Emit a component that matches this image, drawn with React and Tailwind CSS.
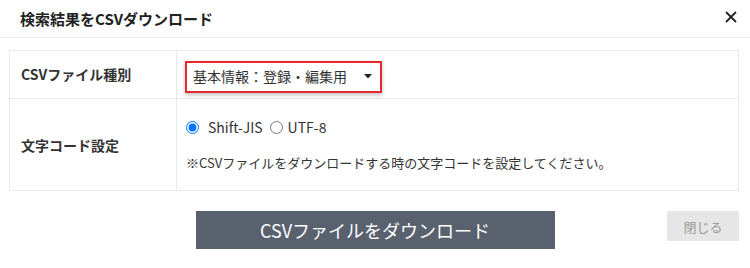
import React from "react";

const font = { fontFamily: '"Noto Sans CJK JP", "Noto Sans", sans-serif' };

export default function App() {
  return (
    <div className="w-[750px] h-[268px] bg-white text-[#333]" style={font}>
      <div className="flex items-center justify-between h-[38px] border-b border-[#e8e8e8] pl-[20px] pr-[13px]">
        <div className="text-[15px] font-bold leading-none text-[#222]">検索結果をCSVダウンロード</div>
        <svg width="12" height="12" viewBox="0 0 12 12" className="mt-[-4px]">
          <path d="M1 1L11 11M11 1L1 11" stroke="#222" strokeWidth="1.8" />
        </svg>
      </div>

      <div className="ml-[9px] mt-[12px] w-[730px] border border-[#e8e8e8]">
        <div className="grid grid-cols-[167px_1fr] h-[48px] border-b border-[#e8e8e8]">
          <div className="flex items-center pl-[11px] text-[14px] font-bold text-[#333] border-r border-[#e8e8e8]">
            CSVファイル種別
          </div>
          <div className="flex items-center pl-[8px] pt-[4px]">
            <div className="flex items-center justify-between w-[197px] h-[32px] border-2 border-[#e8282b] pl-[6px] pr-[8px] shadow-[0_2px_4px_rgba(0,0,0,0.25)] bg-white">
              <span className="text-[14px] text-[#333]">基本情報：登録・編集用</span>
              <svg width="8" height="5" viewBox="0 0 8 5"><path d="M0 0H8L4 4.5Z" fill="#222" /></svg>
            </div>
          </div>
        </div>
        <div className="grid grid-cols-[167px_1fr] h-[91px]">
          <div className="flex items-center pl-[11px] text-[14px] font-bold text-[#333] border-r border-[#e8e8e8] pt-[2px]">
            文字コード設定
          </div>
          <div className="flex flex-col pl-[9px] pt-[18px]">
            <div className="flex items-center h-[20px] text-[14px] text-[#333]">
              <input type="radio" name="enc" defaultChecked className="m-0 w-[13px] h-[13px] accent-[#0075ff]" />
              <span className="ml-[9px]">Shift-JIS</span>
              <input type="radio" name="enc" className="m-0 ml-[7px] w-[13px] h-[13px]" />
              <span className="ml-[5px]">UTF-8</span>
            </div>
            <div className="mt-[17px] text-[13px] text-[#333] leading-[18px]">
              ※CSVファイルをダウンロードする時の文字コードを設定してください。
            </div>
          </div>
        </div>
      </div>

      <div className="grid grid-cols-[1fr_359px_1fr] items-start mt-[20px]">
        <div />
        <button className="h-[38px] bg-[#59616f] text-white text-[18px] leading-none">
          CSVファイルをダウンロード
        </button>
        <div className="flex justify-end pr-[11px]">
          <button className="w-[72px] h-[30px] bg-[#e6e6e6] text-[#999] text-[13px] leading-none">閉じる</button>
        </div>
      </div>
    </div>
  );
}
